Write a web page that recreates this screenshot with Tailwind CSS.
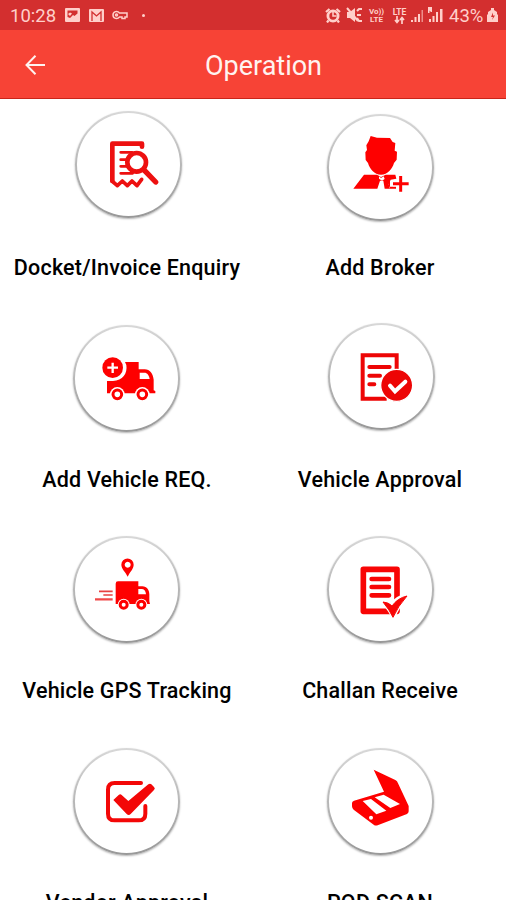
<!DOCTYPE html>
<html>
<head>
  <meta charset="utf-8">
  <meta name="viewport" content="width=device-width, initial-scale=1">
  <title>Operation</title>
  <script src="https://cdn.jsdelivr.net/npm/@tailwindcss/browser@4"></script>
</head>
<body class="bg-white font-['Roboto',sans-serif]">
  <div class="h-[900px] w-[506px] overflow-hidden">
    <!-- Status Bar -->
    <div class="h-[30px] bg-[#d32f2f] text-[#ffcfca] flex items-center justify-between pl-[10px] pr-[8px]">
      <div class="flex items-center">
        <span class="w-[55px] text-[18.5px] leading-[30px] whitespace-nowrap pt-[2px]">10:28</span>
        <svg class="w-[15px] h-[14px]" viewBox="0 0 15 14"><rect width="15" height="14" rx="1" fill="currentColor"/><path d="M2.500 2.500h10v3L9.500 8 8 7 5 10 2.500 9z" fill="#d32f2f"/><path d="M3 6l2-1.500 2 1L5 8z" fill="currentColor"/></svg>
        <svg class="w-[15px] h-[13px] ml-[9px]" viewBox="0 0 15 13"><rect width="15" height="13" rx="1" fill="currentColor"/><path d="M3 12V3l4.500 4L12 3v9" fill="none" stroke="#d32f2f" stroke-width="1.300"/></svg>
        <svg class="w-[16px] h-[10px] ml-[8px]" viewBox="0 0 16 10" fill="none" stroke="currentColor" stroke-width="1.500"><path d="M7.500 3C5.500.500 1 1.200 1 5s4.500 4.500 6.500 2H10v1.500h3V7h2V3z"/><circle cx="4.500" cy="5" r="1"/></svg>
        <span class="w-[3px] h-[3px] rounded-full bg-[#ffcfca] ml-[14px]"></span>
      </div>
      <div class="flex items-center">
        <svg class="w-[16px] h-[15px]" viewBox="0 0 16 15"><circle cx="8" cy="8" r="6.500" fill="currentColor"/><path d="M1 4l3.500-3M15 4l-3.500-3M3.500 12.500L2 14.500M12.500 12.500l1.500 2" stroke="currentColor" stroke-width="2.200"/><circle cx="8" cy="8" r="3.700" fill="#d32f2f"/><path d="M8 4v4h3.500" stroke="currentColor" stroke-width="1.500" fill="none"/></svg>
        <svg class="w-[17px] h-[16px] ml-[5px]" viewBox="0 0 17 16"><path d="M1 5h3l5-4v14l-5-4H1z" fill="currentColor"/><path d="M1 1l11 13M11 4l2-2h3M11 8h4M11 11l2 3h3" fill="none" stroke="currentColor" stroke-width="2"/></svg>
        <div class="ml-[6px] w-[15px] flex flex-col items-center text-[8px] font-bold leading-[9px] pt-px"><span class="h-[8px]">Vo))</span><span>LTE</span></div>
        <div class="ml-[8px] w-[15px] flex flex-col items-center text-[8.5px] font-bold leading-[9px] pt-px">
          <span class="h-[8px]">LTE</span>
          <svg class="w-[11px] h-[8px]" viewBox="0 0 11 8" fill="none" stroke="currentColor" stroke-width="1.700"><path d="M3 0v6M1 4l2 2.500L5 4M8 8V2M6 4l2-2.500L10 4"/></svg>
        </div>
        <svg class="w-[13px] h-[15px] ml-[4px]" viewBox="0 0 13 15" fill="currentColor"><path d="M0 12h2v2H0zM3.500 9h2v5h-2zM7 6h2v8H7z"/><path d="M10.500 2H12v12h-1.500z" opacity=".6"/></svg>
        <svg class="w-[15px] h-[16px] ml-[4px]" viewBox="0 0 15 16" fill="currentColor"><path d="M1 12h2v3H1zM4.500 9h2v6h-2zM8 5h2v10H8zM12 2h2.500v13H12zM0 0h4v5H3L1.500 3.500V6H0z"/></svg>
        <span class="ml-[6px] w-[35px] text-[18.5px] leading-[30px] pt-[2px] whitespace-nowrap">43%</span>
        <svg class="w-[11px] h-[14px] ml-[3px]" viewBox="0 0 11 14"><path d="M4 0h3v2l3 2v2l1 1v7H0V7l1-1V4l3-2z" fill="currentColor"/><path d="M6 4.500L4 9h2l-1 3 3-4.500H6z" fill="#d32f2f"/></svg>
      </div>
    </div>

    <!-- Header -->
    <header class="h-[69px] bg-[#f74336] border-b border-[#c9251a] text-[#fff3f0] grid grid-cols-[70px_1fr_49px] items-center">
      <svg class="w-[20px] h-[20px] ml-[25px] mt-px" viewBox="0 0 20 20" fill="none" stroke="currentColor" stroke-width="2"><path d="M20 10H2M10.500 .800L1.500 10l9 9.200"/></svg>
      <h1 class="text-[27px] leading-[30px] text-center pt-[4px]">Operation</h1>
    </header>

    <!-- Menu Grid -->
    <main class="grid grid-cols-2 auto-rows-[211.5px] text-black">
      <a class="flex flex-col items-center">
        <div class="h-[154px] pt-[12px] pl-[3px]">
          <div class="w-[107px] h-[107px] rounded-full bg-gradient-to-b from-[#d8d8d8] to-[#989898] p-[2px] shadow-[0_1px_2px_rgba(0,0,0,0.3)]">
            <svg class="w-full h-full rounded-full bg-white" viewBox="38 39 309 309" fill="none" stroke="#ed1010">
              <path d="M233 140V131H144V243" stroke-width="14" stroke-linejoin="round" stroke-linecap="round"/>
              <path d="M143 243l16 14 15-14 15 14 14-14 15 14 14-19" stroke-width="11" stroke-linejoin="round" stroke-linecap="round"/>
              <path d="M169 157h34M169 179h19M169 199h19M169 220h36" stroke-width="8" stroke-linecap="round"/>
              <circle cx="217" cy="187" r="28" stroke-width="14" fill="white"/>
              <path d="M241 212l33 34" stroke-width="16" stroke-linecap="round"/>
            </svg>
          </div>
        </div>
        <span class="text-[21.5px] leading-[30px] font-medium whitespace-nowrap tracking-[0.2px] pl-[1px]">Docket/Invoice Enquiry</span>
      </a>
      <a class="flex flex-col items-center">
        <div class="h-[154px] pt-[14.5px] pl-[2px]">
          <div class="w-[107px] h-[107px] rounded-full bg-gradient-to-b from-[#d8d8d8] to-[#989898] p-[2px] shadow-[0_1px_2px_rgba(0,0,0,0.3)]">
            <svg class="w-full h-full rounded-full bg-white" viewBox="39 46 309 309" fill="#fe0000">
              <path d="M164 106l19 5 39 1 8 12 8 3-2 23 7 3-1 24-8 10c-5 18-19 35-39 35s-34-17-39-35l-7-9-1-23 5-7-2-14 7-12z"/>
              <path d="M144 222h39l12 7 14-7h29l3 12-17 3-6 14 4 13h-16l-4-24h-10l-8 24h-72z"/>
              <path d="M189 227l6 5 8-5 3 8-8 5-9-6z" fill="white"/>
              <path d="M222 236h-4v22h22v6h-18z"/>
              <path d="M254 226v47M231 249h47" fill="none" stroke="white" stroke-width="15"/>
              <path d="M254 226v47M231 249h47" fill="none" stroke="#fe0000" stroke-width="9"/>
            </svg>
          </div>
        </div>
        <span class="text-[21.5px] leading-[30px] font-medium whitespace-nowrap tracking-[0.2px] pl-[1px]">Add Broker</span>
      </a>
      <a class="flex flex-col items-center">
        <div class="h-[154px] pt-[14px]">
          <div class="w-[107px] h-[107px] rounded-full bg-gradient-to-b from-[#d8d8d8] to-[#989898] p-[2px] shadow-[0_1px_2px_rgba(0,0,0,0.3)]">
            <svg class="w-full h-full rounded-full bg-white" viewBox="34 43 309 309" fill="#fe0000">
              <path d="M184 148h41v22h18c16 0 25 14 27 31v32l5 2v7H130v-37h18c29-1 44-23 40-48z"/>
              <path d="M228 180h14c9 0 14 8 16 19h-30z" fill="white"/>
              <circle cx="147" cy="165" r="31"/>
              <path d="M147 150v31M131 165h32" stroke="white" stroke-width="7"/>
              <circle cx="161" cy="245" r="22" fill="white"/><circle cx="161" cy="245" r="13" fill="white" stroke="#fe0000" stroke-width="9"/>
              <circle cx="236" cy="245" r="22" fill="white"/><circle cx="236" cy="245" r="13" fill="white" stroke="#fe0000" stroke-width="9"/>
            </svg>
          </div>
        </div>
        <span class="text-[21.5px] leading-[30px] font-medium whitespace-nowrap tracking-[0.2px] pl-[1px]">Add Vehicle REQ.</span>
      </a>
      <a class="flex flex-col items-center">
        <div class="h-[154px] pt-[12px] pl-[4px]">
          <div class="w-[107px] h-[107px] rounded-full bg-gradient-to-b from-[#d8d8d8] to-[#989898] p-[2px] shadow-[0_1px_2px_rgba(0,0,0,0.3)]">
            <svg class="w-full h-full rounded-full bg-white" viewBox="42 37 309 309" fill="none" stroke="#ed0505">
              <path d="M242 172V128H140V258H212" stroke-width="12"/>
              <path d="M160 163h61M160 189h32M160 215h15" stroke-width="12" stroke-linecap="round"/>
              <circle cx="242" cy="218" r="48" fill="#ed0505" stroke="white" stroke-width="4"/>
              <path d="M222 219l15 17 31-29" stroke="white" stroke-width="12" stroke-linecap="round"/>
            </svg>
          </div>
        </div>
        <span class="text-[21.5px] leading-[30px] font-medium whitespace-nowrap tracking-[0.2px] pl-[1px]">Vehicle Approval</span>
      </a>
      <a class="flex flex-col items-center">
        <div class="h-[154px] pt-[14px]">
          <div class="w-[107px] h-[107px] rounded-full bg-gradient-to-b from-[#d8d8d8] to-[#989898] p-[2px] shadow-[0_1px_2px_rgba(0,0,0,0.3)]">
            <svg class="w-full h-full rounded-full bg-white" viewBox="34 43 309 309" fill="#fe0000">
              <path fill-rule="evenodd" d="M192 159c-6-13-19-24-19-36a18 18 0 0 1 37 0c0 12-12 23-18 36zM192 114a9 9 0 1 0 .1 0z"/>
              <path d="M163 173h61v15h12c14 0 21 12 21 24v21l2 8H156v-61q0-7 7-7z"/>
              <path d="M224 196h10c7 0 12 5 13 16h-23z" fill="white"/>
              <circle cx="180" cy="243" r="18" fill="white"/><circle cx="180" cy="243" r="10.500" fill="white" stroke="#fe0000" stroke-width="9"/>
              <circle cx="233" cy="243" r="18" fill="white"/><circle cx="233" cy="243" r="10.500" fill="white" stroke="#fe0000" stroke-width="9"/>
              <path d="M106 203h41M119 214h28" stroke="#e84040" stroke-width="5"/><path d="M94 227h53" stroke="#f04848" stroke-width="7"/>
            </svg>
          </div>
        </div>
        <span class="text-[21.5px] leading-[30px] font-medium whitespace-nowrap tracking-[0.2px] pl-[1px]">Vehicle GPS Tracking</span>
      </a>
      <a class="flex flex-col items-center">
        <div class="h-[154px] pt-[14px] pl-[2px]">
          <div class="w-[107px] h-[107px] rounded-full bg-gradient-to-b from-[#d8d8d8] to-[#989898] p-[2px] shadow-[0_1px_2px_rgba(0,0,0,0.3)]">
            <svg class="w-full h-full rounded-full bg-white" viewBox="39 43 309 309" fill="none" stroke="#f80505">
              <rect x="142" y="137" width="101" height="126" stroke-width="17" stroke-linejoin="round"/>
              <path d="M167 166h52M167 190h52M167 215h52" stroke-width="14" stroke-linecap="round"/>
              <path d="M201 235l25 10q17-24 47-30-27 30-41 65-10-22-31-45z" fill="white" stroke="white" stroke-width="12"/>
              <path d="M201 235q17 1 27 12 17-24 45-30-27 30-42 64-10-22-30-46z" fill="#f80505" stroke-width="3"/>
            </svg>
          </div>
        </div>
        <span class="text-[21.5px] leading-[30px] font-medium whitespace-nowrap tracking-[0.2px] pl-[1px]">Challan Receive</span>
      </a>
      <a class="flex flex-col items-center">
        <div class="h-[154px] pt-[14px]">
          <div class="w-[107px] h-[107px] rounded-full bg-gradient-to-b from-[#d8d8d8] to-[#989898] p-[2px] shadow-[0_1px_2px_rgba(0,0,0,0.3)]">
            <svg class="w-full h-full rounded-full bg-white" viewBox="34 44 309 309" fill="none" stroke="#f30707">
              <path d="M232 143H153q-20 0-20 20V235q0 20 20 20H225q20 0 20-20V212" stroke-width="12" stroke-linecap="round"/>
              <path d="M149 194l16-15q5-4 9 0l20 18 60-50q5-4 9 0l8 8q5 5 0 9l-70 72q-6 6-12 0z" fill="#f30707" stroke="none"/>
            </svg>
          </div>
        </div>
        <span class="text-[21.5px] leading-[30px] font-medium whitespace-nowrap tracking-[0.2px] pl-[1px]">Vendor Approval</span>
      </a>
      <a class="flex flex-col items-center">
        <div class="h-[154px] pt-[14px] pl-[2px]">
          <div class="w-[107px] h-[107px] rounded-full bg-gradient-to-b from-[#d8d8d8] to-[#989898] p-[2px] shadow-[0_1px_2px_rgba(0,0,0,0.3)]">
            <svg class="w-full h-full rounded-full bg-white" viewBox="39 44 309 309" fill="#fe0000">
              <path d="M173 103l65 31q6 3 8 10l32 68v16q0 5-5 8l-88 34q-7 2-12-2l-60-45q-5-4-5-10v-10q0-5 6-7l90-27z"/>
              <path d="M140 197l25-6 46 35-30 11zM176 186l27-8 49 28-29 12z" fill="white"/>
              <circle cx="165" cy="247" r="6" fill="white"/>
            </svg>
          </div>
        </div>
        <span class="text-[21.5px] leading-[30px] font-medium whitespace-nowrap tracking-[0.2px] pl-[1px]">POD SCAN</span>
      </a>
    </main>
  </div>
</body>
</html>
